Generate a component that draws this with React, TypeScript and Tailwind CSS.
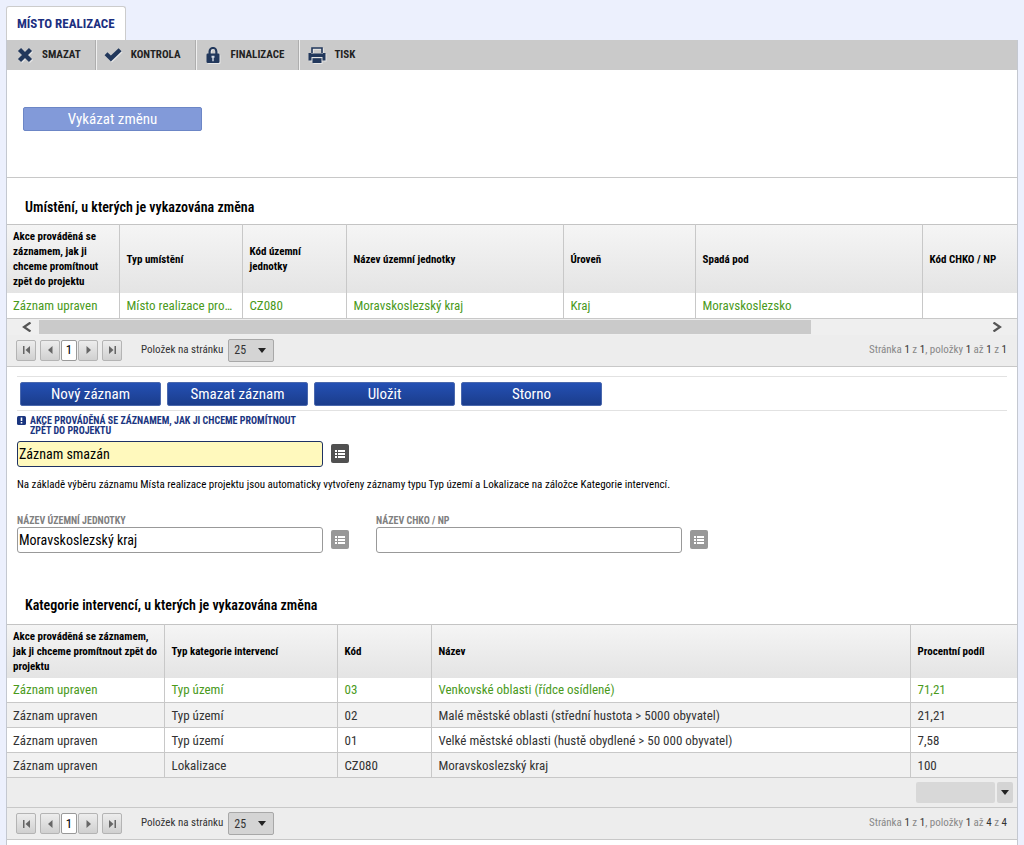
import { useState } from 'react'
import type { ReactNode } from 'react'
import clsx from 'clsx'

type Column = { label: string; width?: string }

const PLACE_COLUMNS: Column[] = [
  { label: 'Akce prováděná se záznamem, jak ji chceme promítnout zpět do projektu', width: 'w-[112px]' },
  { label: 'Typ umístění', width: 'w-[123px]' },
  { label: 'Kód územní jednotky', width: 'w-[104px]' },
  { label: 'Název územní jednotky', width: 'w-[217px]' },
  { label: 'Úroveň', width: 'w-[132px]' },
  { label: 'Spadá pod', width: 'w-[227px]' },
  { label: 'Kód CHKO / NP' },
]

const PLACE_ROWS = [
  ['Záznam upraven', 'Místo realizace pro...', 'CZ080', 'Moravskoslezský kraj', 'Kraj', 'Moravskoslezsko', ''],
]

const CATEGORY_COLUMNS: Column[] = [
  { label: 'Akce prováděná se záznamem, jak ji chceme promítnout zpět do projektu', width: 'w-[157px]' },
  { label: 'Typ kategorie intervencí', width: 'w-[173px]' },
  { label: 'Kód', width: 'w-[94px]' },
  { label: 'Název' },
  { label: 'Procentní podíl', width: 'w-[107px]' },
]

const CATEGORY_ROWS = [
  ['Záznam upraven', 'Typ území', '03', 'Venkovské oblasti (řídce osídlené)', '71,21'],
  ['Záznam upraven', 'Typ území', '02', 'Malé městské oblasti (střední hustota > 5000 obyvatel)', '21,21'],
  ['Záznam upraven', 'Typ území', '01', 'Velké městské oblasti (hustě obydlené > 50 000 obyvatel)', '7,58'],
  ['Záznam upraven', 'Lokalizace', 'CZ080', 'Moravskoslezský kraj', '100'],
]

function CrossIcon() {
  return (
    <svg width="16" height="16" viewBox="0 0 16 16" stroke="currentColor" strokeWidth="4.4">
      <path d="M2.5 2.5l11 11M13.5 2.5l-11 11" />
    </svg>
  )
}

function CheckIcon() {
  return (
    <svg width="18" height="16" viewBox="0 0 18 16" fill="currentColor">
      <path d="M0.6 8.2L3.4 5.3 6.9 8.6 14.6 1.2 17.6 4.2 6.9 14.6z" />
    </svg>
  )
}

function LockIcon() {
  return (
    <svg width="14" height="16" viewBox="0 0 14 16">
      <path d="M3.6 8V4.4a3.4 3.4 0 0 1 6.8 0V8" fill="none" stroke="currentColor" strokeWidth="2.2" />
      <rect x="0.5" y="6.5" width="13" height="9.5" rx="1.2" fill="currentColor" />
      <path d="M5.5 8.8h3v2h-0.8v3.4H6.3v-3.4H5.500z" fill="#d4dae4" />
    </svg>
  )
}

function PrintIcon() {
  return (
    <svg width="18" height="16" viewBox="0 0 18 16">
      <path d="M4 6V1h10v5" fill="none" stroke="currentColor" strokeWidth="1.6" />
      <path d="M0.5 6h2.500v1.200h12V6h2.500v7.500H14.5V10h-11v3.500h-3z" fill="currentColor" />
      <path d="M3 6.500h12V10H3z" fill="currentColor" />
      <rect x="4.5" y="11.200" width="9" height="4.800" fill="currentColor" />
    </svg>
  )
}

function ListIcon() {
  return (
    <svg width="10" height="8" viewBox="0 0 10 8" fill="currentColor">
      <path d="M0 0h2v2H0zM3 0h7v2H3zM0 3h2v2H0zM3 3h7v2H3zM0 6h2v2H0zM3 6h7v2H3z" />
    </svg>
  )
}

function Caret({ className }: { className?: string }) {
  return (
    <svg className={className} width="8" height="5" viewBox="0 0 8 5" fill="#222">
      <path d="M0 0h8L4 5z" />
    </svg>
  )
}

function ToolbarButton({ icon, label, last }: { icon: ReactNode; label: string; last?: boolean }) {
  return (
    <button
      className={clsx(
        'flex h-full items-center gap-2 pl-2 pr-[14px] text-[11px] font-bold text-[#222]',
        !last && 'border-r border-[#aeaeae] shadow-[1px_0_0_#f0f0f0]',
      )}
    >
      <span className="flex w-[19px] justify-center text-[#22385c] drop-shadow-[1px_1px_0_#e6e6e6]">{icon}</span>
      {label}
    </button>
  )
}

function DataTable({ columns, rows, caption }: {
  columns: Column[]
  rows: string[][]
  caption: string
}) {
  return (
    <table className="w-full table-fixed border-collapse border-t border-[#c4c4c4]" aria-label={caption}>
      <thead>
        <tr className="bg-linear-to-b from-[#f5f5f5] to-[#e4e4e4]">
          {columns.map((col, i) => (
            <th
              key={i}
              className={clsx(
                'border-r border-[#c8c8c8] py-1 text-left text-[11px] leading-[15px] font-bold text-black last:border-r-0',
                i === 0 ? 'pr-1 pl-[6px]' : 'pr-3 pl-[7px]',
                col.width,
              )}
            >
              {col.label}
            </th>
          ))}
        </tr>
      </thead>
      <tbody>
        {rows.map((row, r) => (
          <tr
            key={r}
            className={clsx(
              'h-[25px] border-b border-[#c8c8c8] even:bg-[#f1f1f1]',
              r === 0 ? 'text-[#4a9a1c]' : 'text-[#333]',
            )}
          >
            {row.map((cell, c) => (
              <td
                key={c}
                className={clsx(
                  'truncate border-r border-[#c8c8c8] pt-px pr-2 text-[13px] leading-5 last:border-r-0',
                  c === 0 ? 'pl-[6px]' : 'pl-[7px]',
                )}
              >
                {cell}
              </td>
            ))}
          </tr>
        ))}
      </tbody>
    </table>
  )
}

function PagerButton({ label, path }: { label: string; path: string }) {
  return (
    <button
      aria-label={label}
      className="flex h-[21px] w-5 items-center justify-center rounded-xs border border-[#b4b4b4] bg-linear-to-b from-[#ededed] to-[#d0d0d0] text-[#666]"
    >
      <svg width="9" height="8" viewBox="0 0 9 8" fill="currentColor">
        <path d={path} />
      </svg>
    </button>
  )
}

function Pager({ id, total }: { id: string; total: number }) {
  return (
    <div className="flex h-8 items-center border-b border-[#c8c8c8] bg-[#ededed] pr-[10px] pl-[9px] text-[11px] text-[#333]">
      <PagerButton label="První stránka" path="M1 0h1.5v8H1zM8 0v8L3.5 4z" />
      <div className="mx-1 flex items-center gap-px">
        <PagerButton label="Předchozí stránka" path="M6.5 0v8L2 4z" />
        <button className="h-[21px] w-4 rounded-xs border border-[#999] bg-white text-[13px] leading-4 text-black">1</button>
        <PagerButton label="Další stránka" path="M2.5 0v8L7 4z" />
      </div>
      <PagerButton label="Poslední stránka" path="M6.5 0H8v8H6.5zM1 0v8l4.5-4z" />
      <label htmlFor={id} className="mr-[5px] ml-[19px]">Položek na stránku</label>
      <div className="relative">
        <select
          id={id}
          defaultValue="25"
          className="block h-[23px] w-[46px] appearance-none rounded-xs border border-[#a8a8a8] bg-[#d4d4d4] pl-[5px] text-[12px]"
        >
          <option>25</option>
          <option>50</option>
        </select>
        <Caret className="pointer-events-none absolute top-[9px] right-[8px]" />
      </div>
      <p className="ml-auto text-[#888]">
        Stránka <b className="font-normal text-[#333]">1</b> z <b className="font-normal text-[#333]">1</b>, položky{' '}
        <b className="font-normal text-[#333]">1</b> až <b className="font-normal text-[#333]">{total}</b> z{' '}
        <b className="font-normal text-[#333]">{total}</b>
      </p>
    </div>
  )
}

function HorizontalScroll() {
  return (
    <div className="flex h-4 items-center bg-[#efefef] pr-[15px] pl-[15px] text-[#555]">
      <button aria-label="Posunout vlevo" className="mr-[7px]">
        <svg width="10" height="10" viewBox="0 0 10 10" fill="none" stroke="currentColor" strokeWidth="2.2">
          <path d="M8.5 0.5L2 5l6.5 4.5" />
        </svg>
      </button>
      <div className="flex h-[14px] flex-1">
        <div className="w-[81%] bg-[#cacaca]" />
      </div>
      <button aria-label="Posunout vpravo">
        <svg width="10" height="10" viewBox="0 0 10 10" fill="none" stroke="currentColor" strokeWidth="2.2">
          <path d="M1.5 0.5L8 5l-6.5 4.5" />
        </svg>
      </button>
    </div>
  )
}

function LookupField({ id, label, value, required }: {
  id: string
  label: string
  value: string
  required?: boolean
}) {
  const [text, setText] = useState(value)

  return (
    <div className="w-[332px]">
      <label
        htmlFor={id}
        className={clsx(
          'flex gap-1 text-[10px] leading-[10px] font-bold',
          required ? 'mb-[5px] text-[#1a357f]' : 'mb-px text-[#808080]',
        )}
      >
        {required && (
          <svg className="shrink-0" width="9" height="9" viewBox="0 0 9 9">
            <rect width="9" height="9" rx="1.5" fill="#1a357f" />
            <path d="M3.7 1.5h1.6v3.5H3.7zM3.7 6h1.6v1.5H3.7z" fill="#fff" />
          </svg>
        )}
        <span className={required ? 'w-[286px]' : ''}>{label}</span>
      </label>
      <div className="flex items-center gap-2">
        <input
          id={id}
          value={text}
          onChange={(e) => setText(e.target.value)}
          className={clsx(
            'h-[26px] w-[306px] rounded-[3px] border px-px text-[14px] text-black',
            required ? 'border-[#1f3263] bg-[#fff9bd]' : 'border-[#999] bg-white',
          )}
        />
        <button
          aria-label={`Vybrat: ${label}`}
          className={clsx(
            'flex h-[19px] w-[18px] shrink-0 items-center justify-center rounded-xs text-white',
            required ? 'bg-[#505050]' : 'bg-[#989898]',
          )}
        >
          <ListIcon />
        </button>
      </div>
    </div>
  )
}

export default function App() {
  return (
    <div className="min-h-screen bg-[#ecf0fd] px-[6px] pt-[6px] font-['Roboto_Condensed','Liberation_Sans_Narrow',Roboto,sans-serif]">
      <div className="flex">
        <button className="h-[34px] rounded-t-[3px] border border-b-0 border-[#ccc] bg-white px-[10px] text-[13px] font-bold text-[#1c2f80]">
          MÍSTO REALIZACE
        </button>
      </div>

      <main className="min-h-[805px] border-x border-[#c4c8d0] bg-white">
        <div className="flex h-[30px] items-center bg-[#cacaca]">
          <ToolbarButton icon={<CrossIcon />} label="SMAZAT" />
          <ToolbarButton icon={<CheckIcon />} label="KONTROLA" />
          <ToolbarButton icon={<LockIcon />} label="FINALIZACE" />
          <ToolbarButton icon={<PrintIcon />} label="TISK" last />
        </div>

        <div className="border-b border-[#c8c8c8] px-4 pt-[37px] pb-[46px]">
          <button className="block h-6 w-[179px] rounded-xs border border-[#6c86c6] bg-[#829ad9] text-[15px] leading-5 text-white">
            Vykázat změnu
          </button>
        </div>

        <section>
          <h2 className="px-[18px] pt-5 pb-2 text-[14px] leading-[18px] font-semibold text-black">
            Umístění, u kterých je vykazována změna
          </h2>
          <DataTable columns={PLACE_COLUMNS} rows={PLACE_ROWS} caption="Umístění" />
          <HorizontalScroll />
          <Pager id="place-page-size" total={1} />
        </section>

        <form className="px-[10px] pt-[9px]" onSubmit={(e) => e.preventDefault()}>
          <div className="flex gap-[6px] border-y border-[#e2e2e2] px-[3px] pt-[5px] pb-1">
            {['Nový záznam', 'Smazat záznam', 'Uložit', 'Storno'].map((label) => (
              <button
                key={label}
                className="h-6 w-[141px] rounded-xs border border-[#4a68ad] bg-linear-to-b from-[#2450b4] to-[#1b3d8c] text-[15px] leading-5 text-white"
              >
                {label}
              </button>
            ))}
          </div>

          <div className="pt-[5px]">
            <LookupField
              id="action"
              label="AKCE PROVÁDĚNÁ SE ZÁZNAMEM, JAK JI CHCEME PROMÍTNOUT ZPĚT DO PROJEKTU"
              value="Záznam smazán"
              required
            />
          </div>
          <p className="pt-[10px] text-[11px] leading-4 text-black">
            Na základě výběru záznamu Místa realizace projektu jsou automaticky vytvořeny záznamy typu Typ území a
            Lokalizace na záložce Kategorie intervencí.
          </p>
          <div className="flex gap-[27px] pt-[23px]">
            <LookupField id="unit-name" label="NÁZEV ÚZEMNÍ JEDNOTKY" value="Moravskoslezský kraj" />
            <LookupField id="chko-name" label="NÁZEV CHKO / NP" value="" />
          </div>
        </form>

        <section className="pt-[43px]">
          <h2 className="px-[18px] pb-[10px] text-[14px] leading-[18px] font-semibold text-black">
            Kategorie intervencí, u kterých je vykazována změna
          </h2>
          <DataTable columns={CATEGORY_COLUMNS} rows={CATEGORY_ROWS} caption="Kategorie intervencí" />
          <div className="flex h-[30px] items-center justify-end gap-[2px] border-b border-[#c8c8c8] bg-[#ededed] pr-[4px]">
            <input aria-label="Součet" className="h-[21px] w-[79px] rounded-xs bg-[#d8d8d8] px-1 text-[12px]" />
            <button aria-label="Vybrat funkci" className="flex h-[21px] w-4 items-center justify-center rounded-xs bg-[#d4d4d4]">
              <Caret />
            </button>
          </div>
          <Pager id="category-page-size" total={4} />
        </section>
      </main>
    </div>
  )
}
